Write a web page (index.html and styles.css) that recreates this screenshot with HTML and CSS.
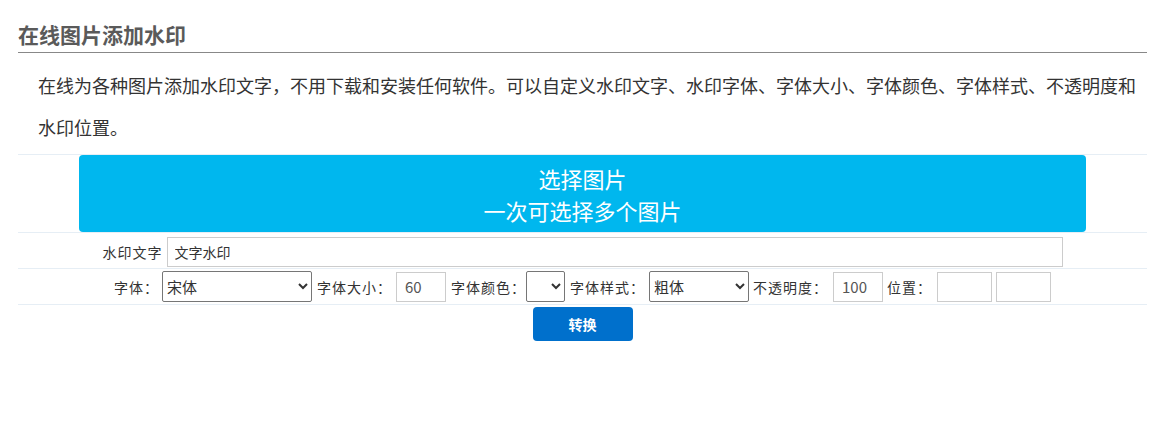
FILE: index.html
```html
<!DOCTYPE html>
<html>
  <head>
    <meta charset="utf-8">
    <link rel="stylesheet" href="styles.css">
  </head>
  <body>
    <div class="page">
      <h2 class="title">在线图片添加水印</h2>
      <p class="intro">在线为各种图片添加水印文字，不用下载和安装任何软件。可以自定义水印文字、水印字体、字体大小、字体颜色、字体样式、不透明度和水印位置。</p>

      <table class="tool">
        <tr>
          <td class="pick-cell">
            <div class="pick">选择图片<br>一次可选择多个图片</div>
          </td>
        </tr>
        <tr>
          <td>
            <div class="row row-text">
              <label>水印文字</label>
              <input class="text-input" type="text" value="文字水印">
            </div>
          </td>
        </tr>
        <tr>
          <td>
            <div class="row row-opts">
              <label>字体：</label>
              <select class="sel sel-font m3">
                <option>宋体</option>
                <option>黑体</option>
                <option>微软雅黑</option>
              </select>
              <label class="m5">字体大小：</label>
              <input class="num m4" type="text" value="60">
              <label class="m5">字体颜色：</label>
              <select class="sel sel-color">
                <option></option>
              </select>
              <label class="m5">字体样式：</label>
              <select class="sel sel-style m4">
                <option>粗体</option>
                <option>常规</option>
                <option>斜体</option>
              </select>
              <label class="m4">不透明度：</label>
              <input class="num m5" type="text" value="100">
              <label class="m4">位置：</label>
              <input class="pos m5" type="text">
              <input class="pos m4" type="text">
            </div>
          </td>
        </tr>
        <tr>
          <td class="btn-cell">
            <button class="convert">转换</button>
          </td>
        </tr>
      </table>
    </div>
  </body>
</html>
```

FILE: styles.css
```css
body {
  margin: 0;
  font-family: "Noto Sans CJK SC", sans-serif;
  color: #333;
  background: #fff;
}

.page {
  width: 1129px;
  margin-left: 18px;
}

.title {
  margin: 0;
  padding: 20px 0 4px;
  font-size: 21px;
  line-height: 28px;
  font-weight: bold;
  color: #5a5a5a;
  border-bottom: 1px solid #888;
}

.intro {
  margin: 11px 0 6px;
  padding-left: 20px;
  font-size: 18px;
  line-height: 42px;
  color: #333;
}

.tool {
  width: 1129px;
  border-collapse: collapse;
}

.tool td {
  padding: 0;
  text-align: center;
  border-bottom: 1px solid #e6eef5;
}

.tool .pick-cell {
  border-top: 1px solid #e6eef5;
}

.pick {
  box-sizing: border-box;
  width: 1007px;
  height: 77px;
  margin: 0 auto;
  padding-top: 7px;
  background: #00b7ee;
  border-radius: 4px;
  color: #fff;
  font-size: 22px;
  line-height: 32px;
  cursor: pointer;
}

.row {
  box-sizing: border-box;
  display: flex;
  justify-content: center;
  align-items: center;
  height: 35px;
}

.row-text {
  padding: 4px 0 1px;
}

.row-opts {
  padding: 2px 0;
}

.row label {
  font-size: 14px;
  letter-spacing: 1px;
  line-height: 20px;
  color: #333;
  white-space: nowrap;
}

.text-input {
  box-sizing: border-box;
  width: 896px;
  height: 30px;
  margin-left: 4px;
  padding: 0 7px;
  border: 1px solid #ccc;
  font-family: inherit;
  font-size: 14px;
  color: #333;
  outline: none;
}

.sel {
  box-sizing: border-box;
  height: 31px;
  border: 1px solid #767676;
  border-radius: 2px;
  background: #fff;
  font-family: inherit;
  font-size: 15px;
  color: #333;
}

.sel-font {
  width: 150px;
}

.sel-color {
  width: 39px;
}

.sel-style {
  width: 100px;
}

.num,
.pos {
  box-sizing: border-box;
  height: 30px;
  padding: 0 8px;
  border: 1px solid #ccc;
  font-family: inherit;
  font-size: 15px;
  color: #555;
  outline: none;
}

.num {
  width: 50px;
}

.pos {
  width: 55px;
}

.m3 { margin-left: 3px; }
.m4 { margin-left: 4px; }
.m5 { margin-left: 5px; }

.tool .btn-cell {
  border-bottom: none;
  padding-top: 2px;
}

.convert {
  width: 100px;
  height: 34px;
  border: none;
  border-radius: 4px;
  background: #0070cc;
  color: #fff;
  font-family: inherit;
  font-size: 14px;
  font-weight: bold;
  cursor: pointer;
}
```
